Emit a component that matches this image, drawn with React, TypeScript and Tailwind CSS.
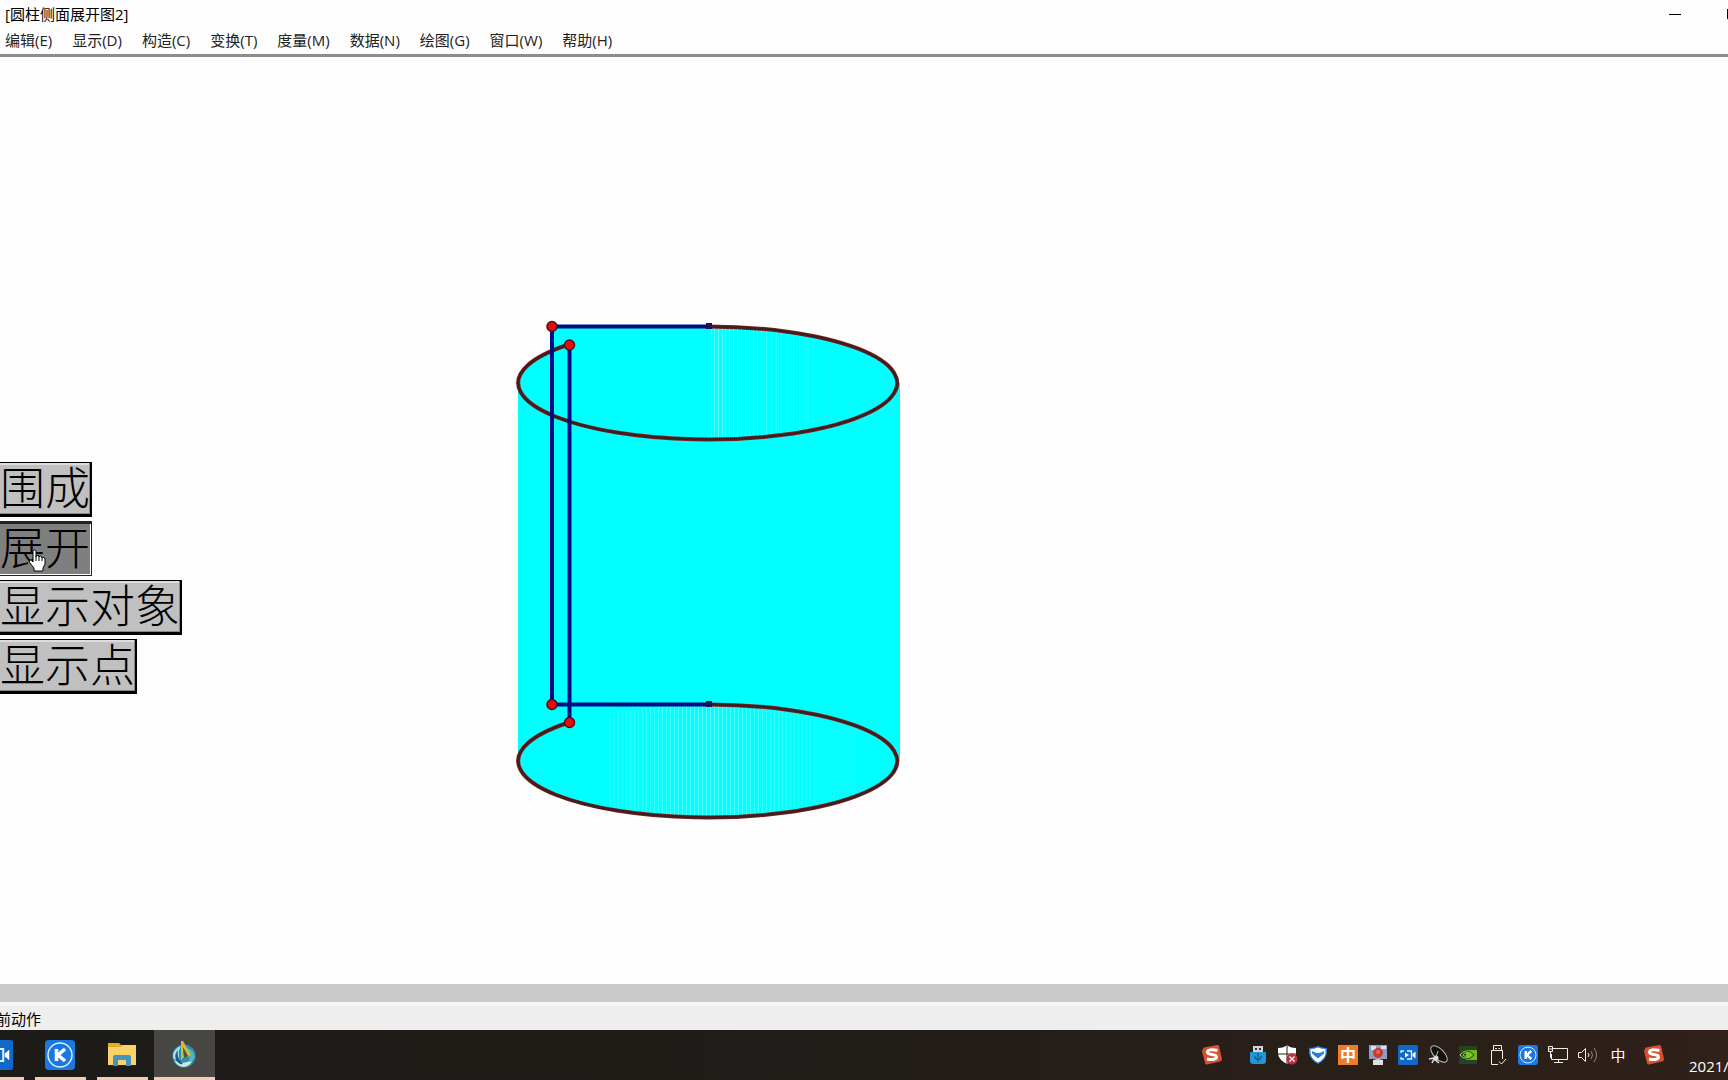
import type { ReactNode } from "react";

const menus = [
  "编辑(E)",
  "显示(D)",
  "构造(C)",
  "变换(T)",
  "度量(M)",
  "数据(N)",
  "绘图(G)",
  "窗口(W)",
  "帮助(H)",
];

const topStripes = [711, 714, 718, 722, 725, 729, 733, 737, 741, 745, 749, 753, 757, 761, 766, 771, 776, 781, 787, 793, 799, 806, 813, 821, 830];
const bottomStripes = Array.from({ length: 62 }, (_, i) => 610 + i * 4);

// how strongly a stripe shows, strongest near the axis of the cylinder
const fade = (x: number, reach: number) => Math.max(0.06, 0.5 - Math.abs(x - 709) / reach);

/* ================= FIGURE ================= */
function Cylinder() {
  return (
    <svg width="400" height="510" viewBox="509 316 400 510" fill="none" role="img" aria-label="圆柱侧面展开图">
      <defs>
        <clipPath id="topFace">
          <ellipse cx="708" cy="383" rx="189" ry="56" />
        </clipPath>
        <clipPath id="bottomFace">
          <ellipse cx="708" cy="761" rx="189" ry="56" />
        </clipPath>
      </defs>
      <path
        d="M552 326H708A189 57 0 0 1 898 383H900V761H898A189 57 0 0 1 520 761H518V383H520A189 57 0 0 1 552 351Z"
        fill="#00ffff"
      />
      <g clipPath="url(#topFace)" stroke="#c8f4f4">
        {topStripes.map((x) => (
          <path key={x} d={`M${x}.5 326V440`} opacity={fade(x, 260)} />
        ))}
      </g>
      <g clipPath="url(#bottomFace)" stroke="#c8f4f4">
        {bottomStripes.map((x) => (
          <path key={x} d={`M${x}.5 706V818`} opacity={fade(x, 260)} />
        ))}
      </g>
      {[0, 378].map((dy) => (
        <g key={dy} transform={`translate(0 ${dy})`}>
          <path d="M708 326.500A189.500 56.500 0 1 1 569 344.500" stroke="#8a1c1c" strokeWidth="4" />
          <path d="M708 326.500A189.500 56.500 0 1 1 569 344.500" stroke="#3a2020" strokeWidth="2.500" />
          <path d="M552 326.500H708" stroke="#000c86" strokeWidth="4" />
          <rect x="706" y="323" width="6" height="6" fill="#24104a" />
        </g>
      ))}
      <path d="M552 326V704M569.500 345V722" stroke="#000c86" strokeWidth="4" />
      <g fill="#e30d0d" stroke="#4d1111" strokeWidth="1.500">
        <circle cx="552" cy="326.500" r="5" />
        <circle cx="569.500" cy="345" r="5" />
        <circle cx="552" cy="704.500" r="5" />
        <circle cx="569.500" cy="722.500" r="5" />
      </g>
    </svg>
  );
}

function HandCursor() {
  return (
    <svg width="18" height="23" viewBox="0 0 18 23" className="pointer-events-none absolute left-7 top-7">
      <path
        d="M5 13V2.500Q5 1 6.500 1T8 2.500V8Q8 6.500 9.500 6.500T11 8.500Q11 7 12.500 7T14 9.500Q14 8.500 15.500 8.500T17 10.500V15L15 19V22H6V19L1.500 13.500Q.5 11.500 2 11Q3.500 10.500 5 13Z"
        fill="#fff"
        stroke="#000"
      />
      <path d="M8 8V12M11 9V12M14 10V12" stroke="#000" />
    </svg>
  );
}

function ActionButton({ children, pressed }: { children: string; pressed?: boolean }) {
  return (
    <button
      aria-pressed={pressed}
      className={
        pressed
          ? "flex h-[55px] items-start border-t-[3px] border-r border-b border-[#222] bg-[#7f7f7f] pr-px text-[45px] leading-[44px] shadow-[inset_-1px_-1px_0_#fff]"
          : "flex h-[55px] items-start border-t border-r-2 border-b-[3px] border-black bg-[#c0c0c0] text-[45px] leading-[46px] shadow-[inset_-1px_-1px_0_#888,inset_0_2px_0_#ddd]"
      }
    >
      {children}
    </button>
  );
}

/* ================= TASKBAR ICONS ================= */
function Camera({ size }: { size: number }) {
  return (
    <svg width={size} height={size} viewBox="0 0 20 20" fill="none">
      <rect width="20" height="20" rx="1.500" fill="#1268c8" />
      <path d="M3 8V6H6M9 6H13.500V14H9M6 14H3V12" stroke="#e2f2ff" strokeWidth="1.300" />
      <path d="M7 7.500V12.500L11 10Z" fill="#fff" />
      <path d="M14.500 9L17.500 6.500V13.500L14.500 11Z" fill="#fff" />
    </svg>
  );
}

function KBadge({ size }: { size: number }) {
  return (
    <svg width={size} height={size} viewBox="0 0 30 30" fill="none">
      <rect width="30" height="30" rx="4" fill="#1b78e2" />
      <circle cx="15" cy="15" r="12" stroke="#d8efff" strokeWidth="1.500" />
      <path d="M11.500 9V21M20 9L13 15L20 21" stroke="#fff" strokeWidth="3.500" />
    </svg>
  );
}

function Folder() {
  return (
    <svg width="28" height="26" viewBox="0 0 28 26">
      <path d="M0 2H11L13 4H27V24H0Z" fill="#e5ad25" />
      <path d="M0 6H13L15 4H28V24H0Z" fill="#f9d368" />
      <path d="M5 25V16Q5 14 7 14H21Q23 14 23 16V25H18V19H10V25Z" fill="#4593c2" />
    </svg>
  );
}

function Sketchpad() {
  return (
    <svg width="26" height="28" viewBox="0 0 26 28">
      <circle cx="13" cy="16" r="11.500" fill="#2b8fb4" />
      <path d="M2 14Q4 8 10 6Q6 13 9 20Q5 21 2 18Z" fill="#a9e2e4" />
      <path d="M3 20Q12 26 22 19Q19 27 12 27Q6 26 3 20Z" fill="#cdebd6" />
      <path d="M7 10Q5 17 12 24Q8 25 5 20Q3 14 7 10Z" fill="#17608c" />
      <path d="M15 8Q23 9 24 17Q22 22 17 22Q21 16 15 8Z" fill="#54b4be" />
      <path d="M10 1L12 1L20 15L17 17L12 7L13 17L10 20Z" fill="#d9b63c" />
      <path d="M12 7L17 16L13 18Z" fill="#405b4c" />
    </svg>
  );
}

function Sogou() {
  return (
    <svg width="20" height="20" viewBox="0 0 20 20">
      <path d="M1 4Q1 3 2 2.500L15 0Q17 0 17 1L20 14Q20 16 18 16.500L5 19.500Q3 19.500 3 18L0 6Z" fill="#d8502e" />
      <path d="M15.500 5.500Q6 3.500 5.500 7Q5.500 9 10 9.500Q15 10 14.500 12.500Q13 15.500 5 14" stroke="#fff" strokeWidth="3" fill="none" />
    </svg>
  );
}

function Usb() {
  return (
    <svg width="18" height="20" viewBox="0 0 18 20" fill="none">
      <path d="M4 1H14V7H4Z" fill="#d4d7d8" />
      <path d="M6 3H8V5H6ZM10 3H12V5H10Z" fill="#333" />
      <path d="M1 7H17V16Q17 19 14 19H4Q1 19 1 16Z" fill="#2197d5" />
      <path d="M9 17V8M6 11V13L9 15L12 13V11" stroke="#0b5789" strokeWidth="1.200" />
    </svg>
  );
}

function Defender() {
  return (
    <svg width="20" height="20" viewBox="0 0 20 20">
      <path d="M9 0Q12 3 18 3V9Q17 15 9 19Q1 15 0 9V3Q6 3 9 0Z" fill="#fff" />
      <path d="M9 0V19M0 9H18" stroke="#271e1a" />
      <circle cx="14" cy="14" r="5.500" fill="#c12f3d" />
      <path d="M11.500 11.500L16.500 16.500M16.500 11.500L11.500 16.500" stroke="#fff" strokeWidth="1.300" />
    </svg>
  );
}

function Manager() {
  return (
    <svg width="20" height="20" viewBox="0 0 20 20" fill="none">
      <path d="M10 1Q14 3 19 3V8Q18 15 10 19Q2 15 1 8V3Q6 3 10 1Z" fill="#287ed5" />
      <path d="M10 2.500Q14 4 17.500 4V8Q17 14 10 17.500Q3 14 2.500 8V4Q6 4 10 2.500Z" fill="#fff" />
      <path d="M4 6Q10 10 16 6V8.500L10 13.500L4 8.500Z" fill="#287ed5" />
    </svg>
  );
}

function Medal() {
  return (
    <svg width="18" height="20" viewBox="0 0 18 20">
      <path d="M0 0H18V14H0Z" fill="#8c9fc5" />
      <path d="M2 1H7V5H2ZM12 1H17V4H12Z" fill="#dae1ea" />
      <circle cx="9" cy="8" r="5" fill="#cc382b" />
      <circle cx="9" cy="7" r="2" fill="#f16748" />
      <path d="M4 15L9 14L14 15V20H4Z" fill="#e6dedb" />
    </svg>
  );
}

function Dish() {
  return (
    <svg width="20" height="20" viewBox="0 0 20 20" fill="none">
      <ellipse cx="11" cy="9" rx="5" ry="10.500" transform="rotate(-45 11 9)" fill="#15110f" stroke="#bbb" />
      <path d="M1 14L6 13L9 16M4 18L6 14L11 18" stroke="#ddd" strokeWidth="1.500" />
      <circle cx="8" cy="13" r="2.500" fill="#ddd" />
      <path d="M8 12L10 6" stroke="#bbb" />
    </svg>
  );
}

function Nvidia() {
  return (
    <svg width="18" height="18" viewBox="0 0 18 18" fill="none">
      <rect width="18" height="18" fill="#264324" />
      <path d="M7 4H18V14H7Z" fill="#72b718" />
      <path d="M1 9Q6 2 13 8Q7 16 1 9ZM4 9Q7 5 10 8Q7 12 4 9Z" stroke="#a0d34d" />
      <path d="M7 5Q12 5 15 9Q12 13 7 13" stroke="#264324" />
    </svg>
  );
}

function UsbEject() {
  return (
    <svg width="16" height="20" viewBox="0 0 16 20" fill="none" stroke="#f3f0ee">
      <path d="M3.500 5V.5H11.500V5M1.500 15V5.500H12.500V14M1.500 15V19.500H8M5 3.500H7M8.500 3.500H10" />
      <path d="M9 16.500L11.500 19L16 14" />
    </svg>
  );
}

function Network() {
  return (
    <svg width="20" height="18" viewBox="0 0 20 18" fill="none" stroke="#f3f0ee">
      <path d="M5 2.500H19.500V13.500H3.500V8M10.500 14V16.500M6 16.500H15M.5.5H4.500V5.500H.5ZM2.500 6V12M1 3H4" />
    </svg>
  );
}

function Volume() {
  return (
    <svg width="20" height="18" viewBox="0 0 20 18" fill="none" stroke="#f3f0ee">
      <path d="M.5 6.500H3.500L7.500 2.500V15.500L3.500 11.500H.5Z" />
      <path d="M10 7Q12 9 10 11" />
      <path d="M13 5Q16 9 13 13M16 2Q21 9 16 16" stroke="#8a8480" />
    </svg>
  );
}

function TrayButton({ label, children }: { label: string; children: ReactNode }) {
  return (
    <button aria-label={label} className="flex h-full w-[30px] items-center justify-center">
      {children}
    </button>
  );
}

function Taskbar() {
  return (
    <footer className="flex h-[50px] shrink-0 overflow-hidden bg-gradient-to-r from-[#1d1b18] via-[#211d19] to-[#30211a]">
      <button aria-label="录屏" className="flex w-6 items-center justify-end border-b-[3px] border-[#f0cdb8] pt-[2px] pr-[11px]">
        <span className="shrink-0">
          <Camera size={30} />
        </span>
      </button>
      <button aria-label="K" className="ml-[11px] flex w-[51px] items-center justify-center border-b-[3px] border-[#f0cdb8] pt-[2px] pr-[2px]">
        <KBadge size={30} />
      </button>
      <button aria-label="文件资源管理器" className="ml-[11px] flex w-[51px] items-center justify-center border-b-[3px] border-[#f0cdb8] pr-[2px]">
        <Folder />
      </button>
      <button aria-label="几何画板" className="ml-[6px] flex w-[61px] items-center justify-center border-b-[3px] border-[#f0cdb8] bg-[#494743] pr-[2px]">
        <Sketchpad />
      </button>

      <div className="ml-auto flex items-center">
        <TrayButton label="搜狗输入法"><Sogou /></TrayButton>
        <div className="w-4" />
        <TrayButton label="USB"><Usb /></TrayButton>
        <TrayButton label="安全中心"><Defender /></TrayButton>
        <TrayButton label="电脑管家"><Manager /></TrayButton>
        <button className="mx-[5px] h-5 w-5 bg-[#ed7c2b] text-base leading-5 font-bold text-white">中</button>
        <TrayButton label="奖章"><Medal /></TrayButton>
        <TrayButton label="录屏工具"><Camera size={20} /></TrayButton>
        <TrayButton label="天线"><Dish /></TrayButton>
        <TrayButton label="显卡设置"><Nvidia /></TrayButton>
        <TrayButton label="弹出设备"><UsbEject /></TrayButton>
        <TrayButton label="K 工具"><KBadge size={20} /></TrayButton>
        <TrayButton label="网络"><Network /></TrayButton>
        <TrayButton label="音量"><Volume /></TrayButton>
        <button className="w-[30px] text-center text-[15px] text-white">中</button>
        <div className="w-[6px]" />
        <TrayButton label="输入法"><Sogou /></TrayButton>
        <time className="ml-5 w-[39px] self-end pb-1 text-[15px] leading-5 text-white">2021/</time>
      </div>
    </footer>
  );
}

export default function App() {
  return (
    <div className="flex h-screen flex-col overflow-hidden bg-[#fdfdfd] font-['Open_Sans','Noto_Sans_CJK_SC',sans-serif] text-[15px] text-black">
      {/* ================= TITLE AND MENUS ================= */}
      <header className="shrink-0 border-b-[3px] border-[#8c8c8c]">
        <div className="flex h-[28px] items-center justify-between pl-[5px]">
          <h1>[圆柱侧面展开图2]</h1>
          <div className="flex items-center gap-[46px]">
            <button aria-label="最小化" className="h-px w-3 bg-black" />
            <button aria-label="最大化" className="h-[10px] w-px bg-black" />
          </div>
        </div>
        <nav className="flex h-[26px] items-center gap-5 pb-[2px] pl-[5px] text-[#222]">
          {menus.map((m) => (
            <button key={m}>{m}</button>
          ))}
        </nav>
      </header>

      {/* ================= SKETCH ================= */}
      <main className="relative min-h-0 flex-1">
        <div className="pt-[259px] pl-[509px]">
          <Cylinder />
        </div>
        <div className="absolute top-[405px] left-0 flex flex-col items-start gap-1 font-['Noto_Sans_CJK_SC',sans-serif] font-light">
          <ActionButton>围成</ActionButton>
          <div className="relative flex">
            <ActionButton pressed>展开</ActionButton>
            <HandCursor />
          </div>
          <ActionButton>显示对象</ActionButton>
          <ActionButton>显示点</ActionButton>
        </div>
      </main>

      <div className="h-[18px] shrink-0 bg-[#cacaca]" />
      <div className="flex h-7 shrink-0 items-end overflow-hidden border-t-4 border-[#f6f6f6] bg-[#eee]">
        <p className="-ml-1 leading-[22px]">前动作</p>
      </div>
      <Taskbar />
    </div>
  );
}
